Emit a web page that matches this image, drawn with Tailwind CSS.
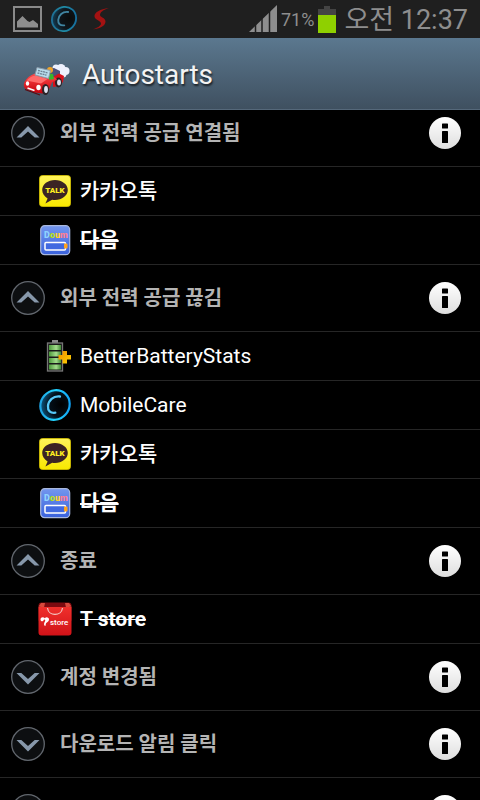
<!DOCTYPE html>
<html lang="ko">

<head>
    <meta charset="UTF-8">
    <meta name="viewport" content="width=device-width, initial-scale=1.0">
    <script src="https://cdn.jsdelivr.net/npm/@tailwindcss/browser@4"></script>
    <title>Autostarts</title>
</head>

<body class="bg-black text-white font-['Roboto','Noto_Sans_CJK_KR',sans-serif]">

    <!-- shared icons -->
    <svg class="absolute w-0 h-0" aria-hidden="true">
        <defs>
            <linearGradient id="infoFill" x1="0" y1="0" x2="0" y2="1">
                <stop offset="0" stop-color="#ffffff" />
                <stop offset="1" stop-color="#dedede" />
            </linearGradient>
            <linearGradient id="talkFill" x1="0" y1="0" x2="0" y2="1">
                <stop offset="0" stop-color="#fff45a" />
                <stop offset="1" stop-color="#f8e800" />
            </linearGradient>
            <linearGradient id="daumFill" x1="0" y1="0" x2="0" y2="1">
                <stop offset="0" stop-color="#7396ee" />
                <stop offset="1" stop-color="#3a62dc" />
            </linearGradient>
            <linearGradient id="careRing" x1="0" y1="0" x2="1" y2="1">
                <stop offset="0" stop-color="#1c8fd8" />
                <stop offset="0.5" stop-color="#22d6ff" />
                <stop offset="1" stop-color="#0a8ff0" />
            </linearGradient>
            <radialGradient id="careFill" cx="0.65" cy="0.65" r="0.7">
                <stop offset="0" stop-color="#000000" />
                <stop offset="0.6" stop-color="#03101a" />
                <stop offset="1" stop-color="#0c5680" />
            </radialGradient>
            <linearGradient id="cellFill" x1="0" y1="0" x2="1" y2="0">
                <stop offset="0" stop-color="#4c9a3c" />
                <stop offset="0.6" stop-color="#a4dc8c" />
                <stop offset="1" stop-color="#3f8a34" />
            </linearGradient>
            <linearGradient id="plusFill" x1="0" y1="0" x2="1" y2="1">
                <stop offset="0" stop-color="#f08c00" />
                <stop offset="1" stop-color="#ffd400" />
            </linearGradient>
            <linearGradient id="bagFill" x1="0" y1="0" x2="0" y2="1">
                <stop offset="0" stop-color="#f0302c" />
                <stop offset="1" stop-color="#d01218" />
            </linearGradient>
            <linearGradient id="carFill" x1="0" y1="0" x2="0" y2="1">
                <stop offset="0" stop-color="#ff4a4a" />
                <stop offset="1" stop-color="#c4000c" />
            </linearGradient>
        </defs>
        <symbol id="collapse" viewBox="0 0 34 34">
            <circle cx="17" cy="17" r="16.3" fill="#0d0f11" stroke="#62676e" stroke-width="1.3" />
            <path d="M5.5 21.5 17 10l11.5 11.5h-4.8L17 15.500l-6.7 6z" fill="#8798ab" />
        </symbol>
        <symbol id="expand" viewBox="0 0 34 34">
            <circle cx="17" cy="17" r="16.3" fill="#0d0f11" stroke="#62676e" stroke-width="1.3" />
            <path d="M5.5 13 17 24.5 28.5 13h-4.8L17 19l-6.7-6z" fill="#8798ab" />
        </symbol>
        <symbol id="info" viewBox="0 0 32 32">
            <circle cx="16" cy="16" r="16" fill="url(#infoFill)" />
            <rect x="13" y="6.5" width="6" height="5" rx="0.6" fill="#000" />
            <rect x="13" y="14" width="6" height="12" rx="0.6" fill="#000" />
        </symbol>
        <symbol id="talk" viewBox="0 0 34 34">
            <rect x="1.5" y="1.5" width="31" height="31" rx="3" fill="url(#talkFill)" stroke="#d8c400" stroke-width="0.8" />
            <path d="M17 6C10 6 4.2 10.3 4.2 16c0 3.6 2.2 6.6 5.4 8.4L7.4 29.5l6.8-3.7c.9.2 1.8.2 2.8.2 7 0 12.8-4.4 12.8-10S24 6 17 6z" fill="#3b2424" />
        </symbol>
        <symbol id="daum" viewBox="0 0 34 34">
            <rect x="2.7" y="2.7" width="29" height="29" rx="4" fill="url(#daumFill)" stroke="#a9b8de" stroke-width="1.2" />
            <rect x="7" y="19.5" width="20.5" height="7.500" rx="1" fill="#4169e0" stroke="#fff" stroke-width="1.5" />
            <rect x="26" y="20.5" width="3.5" height="5" rx="1" fill="#ffa21c" />
        </symbol>
        <symbol id="care" viewBox="0 0 34 34">
            <ellipse cx="17" cy="17" rx="15.3" ry="14.2" transform="rotate(-48 17 17)" fill="url(#careFill)" stroke="url(#careRing)" stroke-width="2.2" />
            <path d="M22 8.5c-7-.8-11.5 4-12 9.500-.4 4.600 2.300 7.300 7.300 6.700" fill="none" stroke="#56c8f8" stroke-width="2.3" stroke-linecap="round" />
        </symbol>
        <symbol id="battery" viewBox="0 0 34 34">
            <rect x="14" y="1" width="6" height="3" fill="#8a8a8a" />
            <rect x="9.5" y="4" width="15" height="28" fill="#1a1a1a" stroke="#777" stroke-width="1.3" />
            <g fill="url(#cellFill)">
                <rect x="11" y="6" width="12" height="5" />
                <rect x="11" y="12.5" width="12" height="5" />
                <rect x="11" y="19" width="12" height="5" />
                <rect x="11" y="25.5" width="12" height="5" />
            </g>
            <path d="M24.5 12H29v4h4v4.500h-4v4h-4.500v-4h-4V16h4z" fill="url(#plusFill)" />
        </symbol>
        <symbol id="bag" viewBox="0 0 34 34">
            <rect x="0.5" y="0.5" width="33" height="20" rx="3" fill="#7c0a10" />
            <path d="M0.5 4.500 6 5.500l1-4.500H3zM33.500 4.500 28 5.500 27 1h4z" fill="#d8483c" />
            <path d="M0.500 5h33v25.500a3 3 0 0 1-3 3h-27a3 3 0 0 1-3-3z" fill="url(#bagFill)" />
            <path d="M9.500 6c1 8.500 14 8.500 15 0" fill="none" stroke="#f3c9c4" stroke-width="1.2" />
            <path d="M2.500 17.500c0-2.500 3-3 4.300-1.200 1.300-1.800 4.400-1 4.200 1.400-.2 1.800-2 2.300-2.800 3.400-.6.900-.4 2-.8 3-2-.9-1.300-3-.6-4.300.6-1.100.7-2.300-.3-2.400-1.100 0-.8 1.600-2 1.900-1 .2-2-.6-2-1.800z" fill="#fff" />
        </symbol>
    </svg>

    <div class="h-screen flex flex-col overflow-hidden">

        <!-- status bar -->
        <div class="h-[38px] shrink-0 flex items-center justify-between bg-[#1f1f1f] pl-[13px] pr-3 text-[#8e8e8e]">
            <div class="flex items-center">
                <svg class="w-[29px] h-[26px]" viewBox="0 0 29 26">
                    <rect x="1" y="1" width="27" height="24" fill="none" stroke="#8a8a8a" stroke-width="2" />
                    <path d="M4 21.500v-6l5.500-5.500 5 5 2 1 3.500-2 5 4v3.500z" fill="#8e8e8e" />
                </svg>
                <svg class="w-7 h-7 ml-2 opacity-60"><use href="#care" /></svg>
                <svg class="w-[18px] h-[22px] ml-[14px]" viewBox="0 0 18 22">
                    <path d="M17 0C8 1 2 4.500 2.500 8.500c.4 3.500 6.500 4 6.500 7 0 2.500-4 4.500-8.500 6C8 20.500 13.500 18 13.500 13.500c0-4-5.500-4-5.500-6.500C8 4 11 2 17 0z" fill="#a31212" />
                </svg>
            </div>
            <div class="flex items-center">
                <svg class="w-7 h-7" viewBox="0 0 28 28">
                    <path d="M0 27 28 0v27z" fill="#8e8e8e" />
                    <path d="M6.500 16v12M13 10v18M20.500 4v24" stroke="#1f1f1f" stroke-width="1.500" />
                </svg>
                <span class="ml-1 mt-0.5 text-[18px] leading-6">71%</span>
                <svg class="w-[18px] h-[27px] ml-1" viewBox="0 0 18 27">
                    <path d="M6 0h6v3h6v6H0V3h6z" fill="#444" />
                    <path d="M0 9h18v18H0z" fill="#8fd000" />
                </svg>
                <span class="ml-2 mt-0.5 text-[27px] leading-9">오전 12:37</span>
            </div>
        </div>

        <!-- action bar -->
        <header class="h-[72px] shrink-0 flex items-center pl-[23px] bg-linear-to-b from-[#5b788f] to-[#3f5060] border-b border-[#55687a]">
            <svg class="w-[47px] h-[34px] mt-3" viewBox="0 0 47 34">
                <g fill="#eef1fd">
                    <circle cx="33" cy="5" r="3.500" />
                    <circle cx="38" cy="5.500" r="4.500" />
                    <circle cx="42.500" cy="8" r="4" />
                    <circle cx="40" cy="11" r="3.500" />
                </g>
                <path d="M25 6l6-1 6 3v5l-8 2z" fill="#4e5078" />
                <path d="M30 14l6-3.500 5 2.500-1 6-4 4-6 1z" fill="#d8101a" />
                <ellipse cx="35.500" cy="19.500" rx="3.500" ry="5" fill="#2b2326" />
                <ellipse cx="36" cy="19.500" rx="1.900" ry="3" fill="#dfe2f0" />
                <path d="M1.500 19c2-4 6-7 10.500-8.500l14 3 6 1 2 2-5 3-3 7-6 4-8-1-10-4c-1.500-2-1.500-4-.5-6.500z" fill="url(#carFill)" />
                <path d="M3.500 17.500c3-3 5.500-4.500 9-5l12 3.500-6.500 4.500z" fill="#ff6a6a" />
                <circle cx="27" cy="7" r="3" fill="#f0a428" />
                <path d="M26 10.500l4 .5 1 5-5 1z" fill="#38b52c" />
                <path d="M14 4.500 27.500 7.500 25.500 15.500 12 12z" fill="#b8dcec" stroke="#8a99a8" />
                <path d="M15 7.500l9.500 2.300M14.500 10l9 2.200" stroke="#6b8294" stroke-width="1.300" stroke-dasharray="2 0.600" />
                <ellipse cx="4.500" cy="20.500" rx="1.700" ry="2.300" fill="#fff" />
                <ellipse cx="15.500" cy="24.500" rx="2.200" ry="2.800" fill="#fff" />
                <path d="M4.500 25l7 2.500" stroke="#fff" stroke-width="1.600" />
                <path d="M2 26.500 17 32" stroke="#5a0a10" stroke-width="1.200" />
                <ellipse cx="22.500" cy="26.500" rx="3.500" ry="5.500" fill="#2b2326" />
                <ellipse cx="23" cy="26.500" rx="1.900" ry="3.400" fill="#dfe2f0" />
            </svg>
            <h1 class="ml-3 mt-0.5 text-[28px] leading-9 text-[#f3f3f3] [text-shadow:1px_2px_2px_#000a]">Autostarts</h1>
        </header>

        <!-- list, scrolled a little under the action bar -->
        <main class="flex-1 min-h-0 overflow-hidden">
            <ul class="-mt-2.5 text-[21px] leading-7">
                <li class="h-[67px] flex items-center border-b border-[#262626] pl-[11px] pr-[19px]">
                    <button aria-label="접기"><svg class="w-[34px] h-[34px]"><use href="#collapse" /></svg></button>
                    <h2 class="flex-1 ml-[15px] text-[20px] font-bold text-[#b4b4b4]">외부 전력 공급 연결됨</h2>
                    <button aria-label="정보"><svg class="w-8 h-8"><use href="#info" /></svg></button>
                </li>
                <li class="h-[49px] flex items-center border-b border-[#262626] pl-[38px]">
                    <svg class="w-[34px] h-[34px]" viewBox="0 0 34 34">
                        <use href="#talk" />
                        <text x="17" y="19" text-anchor="middle" font-size="8" font-weight="900" fill="#ffee20">TALK</text>
                    </svg>
                    <span class="ml-2 font-medium">카카오톡</span>
                </li>
                <li class="h-[49px] flex items-center border-b border-[#262626] pl-[38px]">
                    <svg class="w-[34px] h-[34px]" viewBox="0 0 34 34">
                        <use href="#daum" />
                        <text x="6" y="15" font-size="9" font-weight="900" fill="#8fd2ff">D<tspan fill="#b6e01c">o</tspan><tspan fill="#ffd21c">u</tspan><tspan fill="#ff7f92">m</tspan></text>
                    </svg>
                    <s class="ml-2 font-bold decoration-2">다음</s>
                </li>

                <li class="h-[67px] flex items-center border-b border-[#262626] pl-[11px] pr-[19px]">
                    <button aria-label="접기"><svg class="w-[34px] h-[34px]"><use href="#collapse" /></svg></button>
                    <h2 class="flex-1 ml-[15px] text-[20px] font-bold text-[#b4b4b4]">외부 전력 공급 끊김</h2>
                    <button aria-label="정보"><svg class="w-8 h-8"><use href="#info" /></svg></button>
                </li>
                <li class="h-[49px] flex items-center border-b border-[#262626] pl-[38px]">
                    <svg class="w-[34px] h-[34px]"><use href="#battery" /></svg>
                    <span class="ml-2">BetterBatteryStats</span>
                </li>
                <li class="h-[49px] flex items-center border-b border-[#262626] pl-[38px]">
                    <svg class="w-[34px] h-[34px]"><use href="#care" /></svg>
                    <span class="ml-2">MobileCare</span>
                </li>
                <li class="h-[49px] flex items-center border-b border-[#262626] pl-[38px]">
                    <svg class="w-[34px] h-[34px]" viewBox="0 0 34 34">
                        <use href="#talk" />
                        <text x="17" y="19" text-anchor="middle" font-size="8" font-weight="900" fill="#ffee20">TALK</text>
                    </svg>
                    <span class="ml-2 font-medium">카카오톡</span>
                </li>
                <li class="h-[49px] flex items-center border-b border-[#262626] pl-[38px]">
                    <svg class="w-[34px] h-[34px]" viewBox="0 0 34 34">
                        <use href="#daum" />
                        <text x="6" y="15" font-size="9" font-weight="900" fill="#8fd2ff">D<tspan fill="#b6e01c">o</tspan><tspan fill="#ffd21c">u</tspan><tspan fill="#ff7f92">m</tspan></text>
                    </svg>
                    <s class="ml-2 font-bold decoration-2">다음</s>
                </li>

                <li class="h-[67px] flex items-center border-b border-[#262626] pl-[11px] pr-[19px]">
                    <button aria-label="접기"><svg class="w-[34px] h-[34px]"><use href="#collapse" /></svg></button>
                    <h2 class="flex-1 ml-[15px] text-[20px] font-bold text-[#b4b4b4]">종료</h2>
                    <button aria-label="정보"><svg class="w-8 h-8"><use href="#info" /></svg></button>
                </li>
                <li class="h-[49px] flex items-center border-b border-[#262626] pl-[38px]">
                    <svg class="w-[34px] h-[34px]" viewBox="0 0 34 34">
                        <use href="#bag" />
                        <text x="12" y="23" font-size="8" font-weight="500" fill="#fff">store</text>
                    </svg>
                    <s class="ml-2 font-bold decoration-1">T store</s>
                </li>

                <li class="h-[67px] flex items-center border-b border-[#262626] pl-[11px] pr-[19px]">
                    <button aria-label="펼치기"><svg class="w-[34px] h-[34px]"><use href="#expand" /></svg></button>
                    <h2 class="flex-1 ml-[15px] text-[20px] font-bold text-[#b4b4b4]">계정 변경됨</h2>
                    <button aria-label="정보"><svg class="w-8 h-8"><use href="#info" /></svg></button>
                </li>
                <li class="h-[67px] flex items-center border-b border-[#262626] pl-[11px] pr-[19px]">
                    <button aria-label="펼치기"><svg class="w-[34px] h-[34px]"><use href="#expand" /></svg></button>
                    <h2 class="flex-1 ml-[15px] text-[20px] font-bold text-[#b4b4b4]">다운로드 알림 클릭</h2>
                    <button aria-label="정보"><svg class="w-8 h-8"><use href="#info" /></svg></button>
                </li>
                <li class="h-[67px] flex items-center justify-between border-b border-[#262626] pl-[11px] pr-[19px]">
                    <button aria-label="펼치기"><svg class="w-[34px] h-[34px]"><use href="#expand" /></svg></button>
                    <button aria-label="정보"><svg class="w-8 h-8"><use href="#info" /></svg></button>
                </li>
            </ul>
        </main>
    </div>

</body>

</html>
